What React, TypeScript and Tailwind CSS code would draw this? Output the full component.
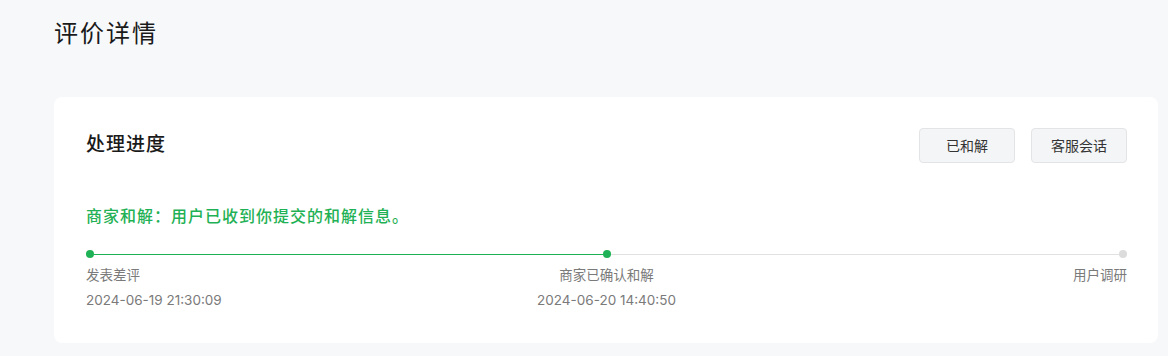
import React from "react";

// ============ Data ============

interface Step {
  label: string;
  time?: string;
  done: boolean;
}

const STEPS: Step[] = [
  { label: "发表差评", time: "2024-06-19 21:30:09", done: true },
  { label: "商家已确认和解", time: "2024-06-20 14:40:50", done: true },
  { label: "用户调研", done: false },
];

const FONT = "font-['Inter','Noto_Sans_CJK_SC',sans-serif]";

// ============ Component ============

const ProgressTimeline: React.FC<{ steps: Step[] }> = ({ steps }) => {
  return (
    <div>
      <div className="flex items-center h-2">
        {steps.map((s, i) => (
          <React.Fragment key={s.label}>
            <span
              className={`w-2 h-2 rounded-full shrink-0 ${
                s.done ? "bg-[#1fb155]" : "bg-[#dcdcdc]"
              }`}
            />
            {i < steps.length - 1 && (
              <span
                className={`flex-1 h-px ${
                  steps[i + 1].done ? "bg-[#1fb155]" : "bg-[#e1e1e1]"
                }`}
              />
            )}
          </React.Fragment>
        ))}
      </div>
      <div className="grid grid-cols-3 mt-[8px] text-[13.5px] text-[#7a7a7a] leading-[19px]">
        {steps.map((s, i) => {
          const align =
            i === 0 ? "items-start" : i === steps.length - 1 ? "items-end" : "items-center";
          return (
            <div key={s.label} className={`flex flex-col ${align}`}>
              <span>{s.label}</span>
              {s.time && <span className="mt-[6px]">{s.time}</span>}
            </div>
          );
        })}
      </div>
    </div>
  );
};

export default function App() {
  return (
    <div className={`min-h-[356px] bg-[#f7f8fa] pl-[54px] pr-[10px] pt-[18px] ${FONT}`}>
      <h1 className="text-[24px] leading-[32px] text-[#1a1a1a] tracking-[2px]">评价详情</h1>

      <div className="mt-[47px] bg-white rounded-lg pl-8 pr-[31px] pt-[31px] pb-[33px]">
        <div className="flex items-center justify-between">
          <h2 className="text-[19px] font-medium text-[#1a1a1a] tracking-[1px]">处理进度</h2>
          <div className="flex gap-4">
            <button
              type="button"
              className="w-24 h-[35px] text-sm text-[#333] bg-[#f4f5f6] border border-[#e3e4e6] rounded"
            >
              已和解
            </button>
            <button
              type="button"
              className="w-24 h-[35px] text-sm text-[#333] bg-[#f4f5f6] border border-[#e3e4e6] rounded"
            >
              客服会话
            </button>
          </div>
        </div>

        <p className="mt-[41px] text-[16px] leading-6 font-medium text-[#1fb155] tracking-[1px]">
          商家和解：用户已收到你提交的和解信息。
        </p>

        <div className="mt-[22px]">
          <ProgressTimeline steps={STEPS} />
        </div>
      </div>
    </div>
  );
}
